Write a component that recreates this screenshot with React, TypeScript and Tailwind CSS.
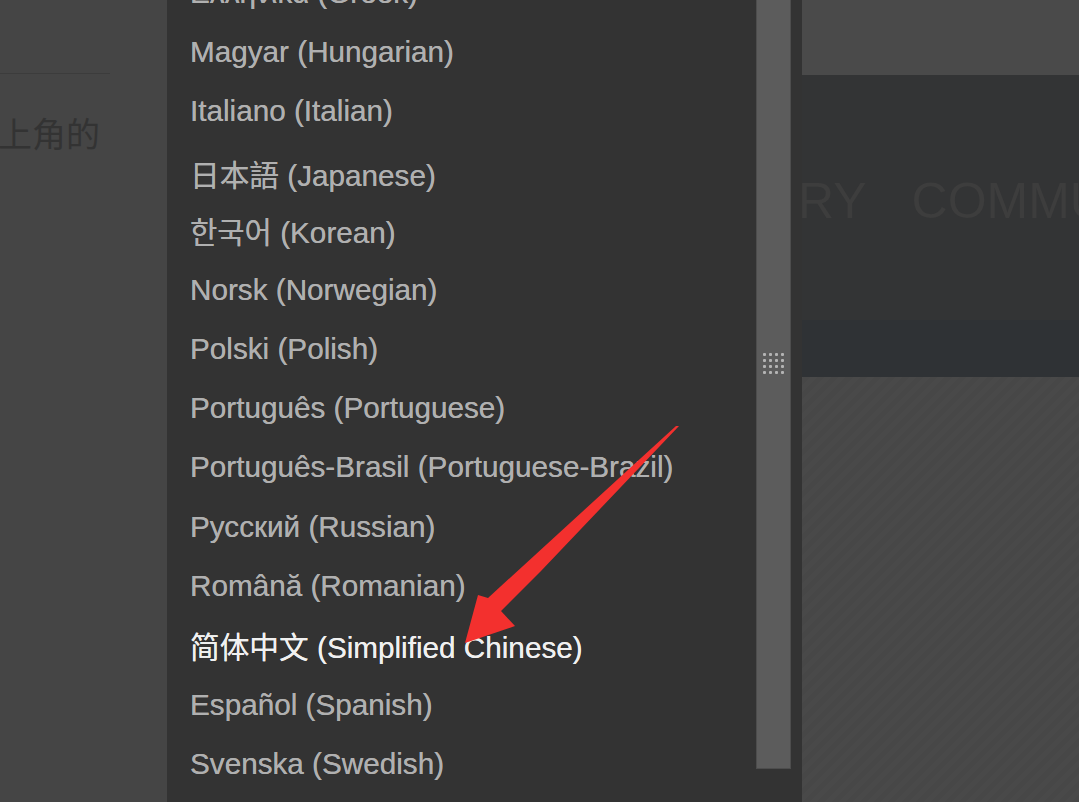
import React from "react";

type Lang = { label: string; active?: boolean; shift: string };

// shift = extra top margin so each row lands on the reference baseline
const languages: Lang[] = [
  { label: "Ελληνικά (Greek)", shift: "mt-0" },
  { label: "Magyar (Hungarian)", shift: "mt-0" },
  { label: "Italiano (Italian)", shift: "mt-0" },
  { label: "日本語 (Japanese)", shift: "mt-[6px]" },
  { label: "한국어 (Korean)", shift: "mt-[-2px]" },
  { label: "Norsk (Norwegian)", shift: "mt-[-2px]" },
  { label: "Polski (Polish)", shift: "mt-0" },
  { label: "Português (Portuguese)", shift: "mt-0" },
  { label: "Português-Brasil (Portuguese-Brazil)", shift: "mt-0" },
  { label: "Русский (Russian)", shift: "mt-[1px]" },
  { label: "Română (Romanian)", shift: "mt-0" },
  { label: "简体中文 (Simplified Chinese)", active: true, shift: "mt-[3px]" },
  { label: "Español (Spanish)", shift: "mt-[-2px]" },
  { label: "Svenska (Swedish)", shift: "mt-0" },
];

const FONT = `font-["Liberation_Sans","Noto_Sans_CJK_SC","Noto_Sans_CJK_JP","Noto_Sans_CJK_KR",sans-serif]`;

function Grip() {
  return (
    <div className="grid grid-cols-4 gap-[3px]">
      {Array.from({ length: 16 }).map((_, i) => (
        <div key={i} className="w-[3px] h-[3px] rounded-[1px] bg-[#b4b4b4]" />
      ))}
    </div>
  );
}

function Arrow() {
  return (
    <svg className="absolute left-0 top-0 pointer-events-none" width={1079} height={802} viewBox="0 0 1079 802">
      <polygon
        points="679,426 541,571 501,611 515,626 465,643 478,595 488,598 676,426"
        fill="#f3302e"
      />
    </svg>
  );
}

export default function App() {
  return (
    <div className={`relative w-[1079px] h-[802px] flex overflow-hidden bg-[#333333] ${FONT}`}>
      {/* dimmed article column */}
      <div className="w-[167px] shrink-0 bg-[#454545] flex flex-col">
        <div className="mt-[73px] h-px w-[110px] bg-[#3c3c3c]" />
        <div className='mt-[40px] ml-[-2px] text-[34px] leading-[38px] text-[#333333] whitespace-nowrap font-["Noto_Sans_CJK_SC",sans-serif]'>
          上角的
        </div>
      </div>

      {/* language dropdown */}
      <div className="w-[635px] shrink-0 bg-[#333333] flex">
        <div className="flex-1 overflow-hidden">
          <div className="mt-[-36px] pl-[23px] flex flex-col">
            {languages.map((l) => (
              <div
                key={l.label}
                className={`${l.shift} h-[59px] flex items-center text-[29.7px] whitespace-nowrap [text-shadow:0_0_0.5px_currentColor] ${
                  l.active ? "text-[#f0f0f0]" : "text-[#b0b0b0]"
                }`}
              >
                {l.label}
              </div>
            ))}
          </div>
        </div>
        <div className="w-[46px] shrink-0 flex">
          <div className="w-[35px] h-[769px] bg-[#5c5c5c] border-x border-b border-[#4d4d4d] flex flex-col items-center pt-[353px]">
            <Grip />
          </div>
        </div>
      </div>

      {/* dimmed store page */}
      <div className="flex-1 flex flex-col">
        <div className="h-[75px] bg-[#4a4a4a]" />
        <div className="h-[245px] bg-[#333435] flex flex-col overflow-hidden">
          <div className="mt-[101px] flex items-start text-[50px] leading-[50px] text-[#3d3d3d] whitespace-nowrap">
            <span className="ml-[-4px]">RY</span>
            <span className="ml-[45px]">COMMUNITY</span>
          </div>
        </div>
        <div className="h-[57px] bg-[#2f3235]" />
        <div className="flex-1 bg-[repeating-linear-gradient(-45deg,#474747_0px,#474747_5px,#494949_5px,#494949_10px)]" />
      </div>

      <Arrow />
    </div>
  );
}
